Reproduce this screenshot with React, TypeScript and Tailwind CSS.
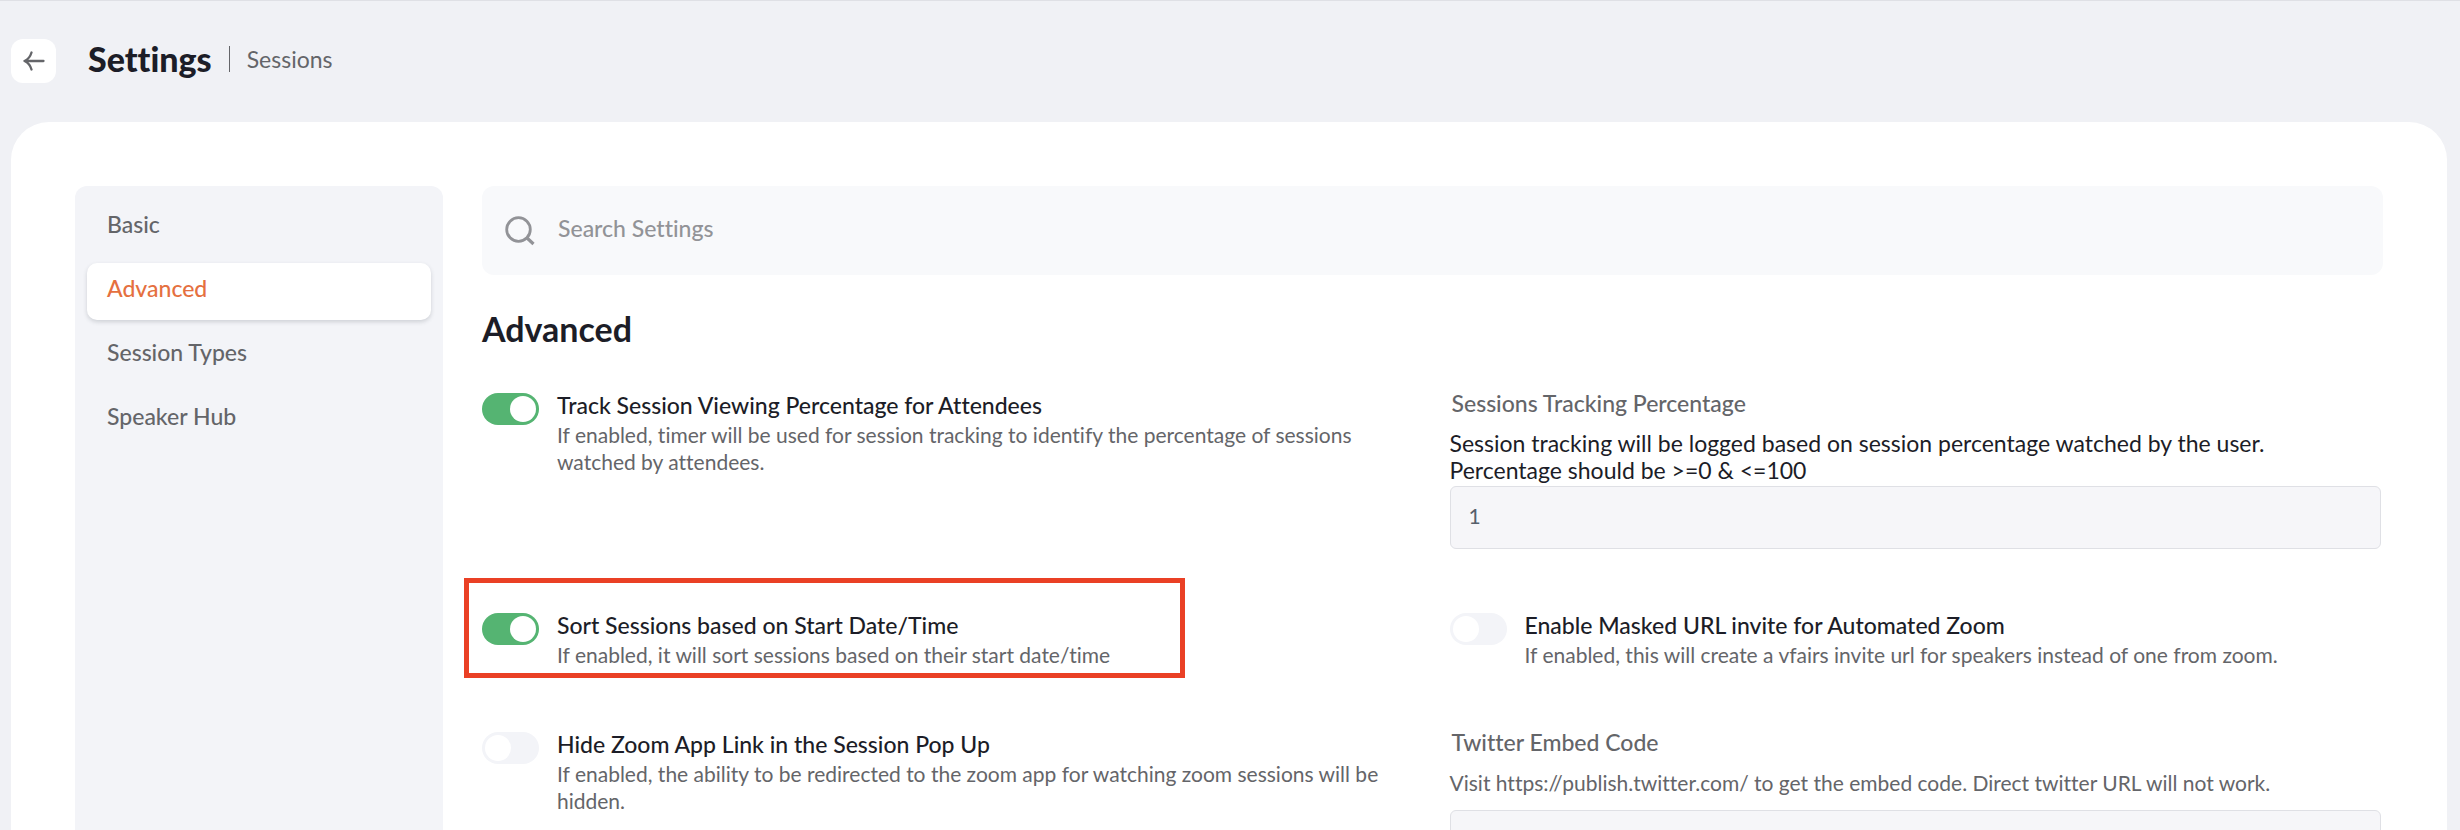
import React, { useState } from 'react';

const TABS = ['Basic', 'Advanced', 'Session Types', 'Speaker Hub'];

interface ToggleSettingProps {
  id: string;
  title: string;
  description: string;
  defaultChecked?: boolean;
  highlighted?: boolean;
}

const ToggleSetting: React.FC<ToggleSettingProps> = ({ id, title, description, defaultChecked = false, highlighted = false }) => {
  const [checked, setChecked] = useState(defaultChecked);

  return (
    <div className="relative flex items-start gap-[18px]">
      {highlighted && (
        <div className="pointer-events-none absolute -left-[18px] -top-[31px] h-[100px] w-[721px] border-[5px] border-[#ea4025]"></div>
      )}
      <input
        id={id}
        type="checkbox"
        role="switch"
        checked={checked}
        onChange={() => setChecked(!checked)}
        aria-describedby={`${id}-description`}
        className="mt-1 flex h-8 w-[57px] shrink-0 cursor-pointer appearance-none items-center rounded-full bg-[#f3f4f8] px-[3px] before:size-[26px] before:rounded-full before:bg-white before:content-[''] checked:justify-end checked:bg-[#55b472]"
      />
      <div className="min-w-0">
        <label htmlFor={id} className="block text-[23px] leading-8 font-medium text-[#1c1d27]">{title}</label>
        <p id={`${id}-description`} className="text-[21px] leading-[27px] text-[#646569]">{description}</p>
      </div>
    </div>
  );
};

const App: React.FC = () => {
  const [activeTab, setActiveTab] = useState('Advanced');

  return (
    <div className="flex h-screen flex-col overflow-y-auto border-t border-[#dfe0e5] bg-[#f0f1f5] font-['Lato',sans-serif] [font-variant-ligatures:none] [scrollbar-width:none]">
      <header className="flex h-[121px] shrink-0 items-start px-[11px] pt-[38px]">
        <button aria-label="Back" className="flex h-11 w-[45px] items-center justify-center rounded-xl bg-white text-[#646569]">
          <svg width="22" height="20" viewBox="0 0 22 20" fill="none" stroke="currentColor" strokeWidth="2.3" strokeLinecap="round" strokeLinejoin="round">
            <path d="M20.5 10H1.5M8.5 1.5C7.5 5 5 8.5 1.5 10C5 11.5 7.5 15 8.5 18.5" />
          </svg>
        </button>
        <div className="ml-8 flex items-center">
          <h1 className="text-[34px] leading-10 font-black text-[#1c1d27]">Settings</h1>
          <span className="mr-[17px] ml-[17px] h-[26px] w-px bg-[#646569]"></span>
          <span className="text-[23px] leading-10 text-[#646569]">Sessions</span>
        </div>
      </header>

      <main className="mr-[13px] ml-[11px] flex grow gap-[39px] rounded-t-[38px] bg-white px-16 pt-16">
        <nav className="w-[368px] shrink-0 rounded-t-xl bg-[#f3f4f8] px-3 pt-[13px]">
          <ul className="space-y-[7px]">
            {TABS.map((tab) => (
              <li key={tab}>
                <button
                  onClick={() => setActiveTab(tab)}
                  className={`flex h-[57px] w-full items-center rounded-[10px] px-5 pb-1.5 text-left text-[23px] font-medium ${activeTab === tab ? 'bg-white text-[#e5703f] shadow-[0_2px_4px_rgba(60,70,80,0.2)]' : 'text-[#646569]'}`}
                >
                  {tab}
                </button>
              </li>
            ))}
          </ul>
        </nav>

        <div className="min-w-0 grow">
          <div className="flex h-[89px] items-center rounded-xl bg-[#f8f9fb] px-[23px]">
            <svg className="shrink-0 text-[#929397]" width="30" height="30" viewBox="0 0 30 30" fill="none" stroke="currentColor" strokeWidth="2.8">
              <circle cx="13.5" cy="13.5" r="11.8" />
              <path d="M21.5 21.5L28.5 28" strokeWidth="3.2" />
            </svg>
            <input
              type="text"
              aria-label="Search Settings"
              placeholder="Search Settings"
              className="ml-[23px] grow bg-transparent pb-1 text-[23px] font-medium text-[#1c1d27] outline-none placeholder:text-[#929397]"
            />
          </div>

          <h2 className="mt-[34px] text-[34px] leading-10 font-bold text-[#1c1d27]">Advanced</h2>

          <div className="mt-10 mr-0.5 grid grid-cols-2 gap-x-9 gap-y-[60px]">
            <ToggleSetting
              id="track-percentage"
              title="Track Session Viewing Percentage for Attendees"
              description="If enabled, timer will be used for session tracking to identify the percentage of sessions watched by attendees."
              defaultChecked
            />
            <div>
              <label htmlFor="tracking-percentage" className="block pl-0.5 text-[23px] leading-7 font-medium text-[#646569]">Sessions Tracking Percentage</label>
              <p className="mt-[13px] mb-0.5 text-[23px] leading-[27px] text-[#1c1d27]">
                Session tracking will be logged based on session percentage watched by the user.<br />
                Percentage should be &gt;=0 &amp; &lt;=100
              </p>
              <input
                id="tracking-percentage"
                type="text"
                defaultValue="1"
                className="block h-[63px] w-full rounded-md border border-[#dfe0e5] bg-[#f6f6f9] px-[18px] pb-1 text-[21px] text-[#56606c] outline-none"
              />
            </div>

            <ToggleSetting
              id="sort-sessions"
              title="Sort Sessions based on Start Date/Time"
              description="If enabled, it will sort sessions based on their start date/time"
              defaultChecked
              highlighted
            />
            <ToggleSetting
              id="masked-url"
              title="Enable Masked URL invite for Automated Zoom"
              description="If enabled, this will create a vfairs invite url for speakers instead of one from zoom."
            />

            <ToggleSetting
              id="hide-zoom-link"
              title="Hide Zoom App Link in the Session Pop Up"
              description="If enabled, the ability to be redirected to the zoom app for watching zoom sessions will be hidden."
            />
            <div>
              <label htmlFor="twitter-embed" className="block pl-0.5 text-[23px] leading-7 font-medium text-[#646569]">Twitter Embed Code</label>
              <p className="mt-[13px] text-[21px] leading-[27px] text-[#646569]">
                Visit https://publish.twitter.com/ to get the embed code. Direct twitter URL will not work.
              </p>
              <textarea
                id="twitter-embed"
                rows={4}
                className="mt-[14px] block w-full resize-none rounded-md border border-[#dfe0e5] bg-[#f6f6f9] px-[18px] py-4 text-[21px] text-[#56606c] outline-none"
              />
            </div>
          </div>
        </div>
      </main>
    </div>
  );
};

export default App;
